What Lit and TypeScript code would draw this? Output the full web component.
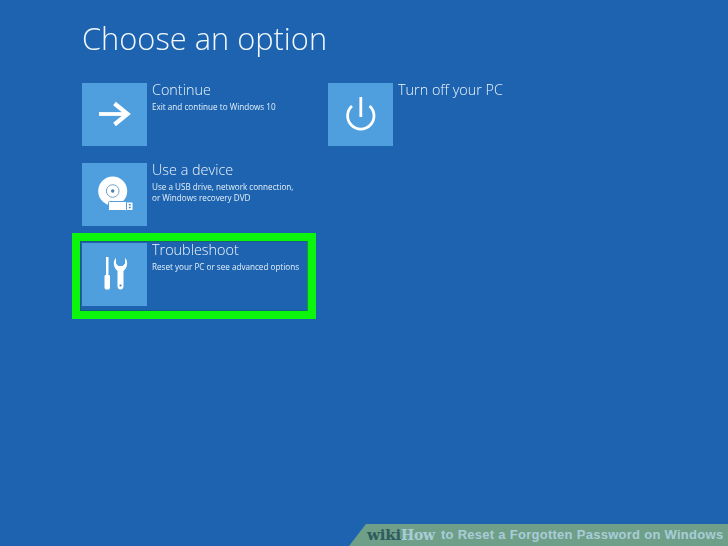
import { LitElement, html, css, svg } from "lit";
import { customElement } from "lit/decorators.js";

const arrow = svg`<svg class="ic" viewBox="0 0 65 63"><path d="M17 31H45" stroke="#fff" stroke-width="3.800" fill="none"/><path d="M32.500 20.500L45.500 31L32.500 41.500" stroke="#fff" stroke-width="4.200" fill="none"/></svg>`;
const power = svg`<svg class="ic" viewBox="0 0 65 63"><path d="M32.800 14V34" stroke="#fff" stroke-width="2.800" fill="none"/><path d="M24 23A13.200 13.200 0 1 0 41.600 23" stroke="#fff" stroke-width="2.800" fill="none"/></svg>`;
const disc = svg`<svg class="ic" viewBox="0 0 65 63"><circle cx="30.700" cy="28" r="14.500" fill="#fff"/><circle cx="30.700" cy="28" r="6.300" fill="none" stroke="#6fa5cc" stroke-width="1"/><circle cx="30.700" cy="28" r="1.700" fill="#4a7fa8"/><rect x="26.500" y="38.500" width="18" height="9" rx="1" fill="#fff" stroke="#4f9fde" stroke-width="1"/><rect x="45" y="39.500" width="5.500" height="7.500" fill="#fff"/><rect x="46.800" y="41" width="2" height="1.500" fill="#5a8fb8"/><rect x="46.800" y="43.800" width="2" height="1.500" fill="#5a8fb8"/></svg>`;
const tools = svg`<svg class="ic" viewBox="0 0 65 63"><path d="M24 14H26.500V32H24Z" fill="#fff"/><path d="M23 32H27.500L28 33.500V45L27 46.500H23.500L22.500 45V33.500Z" fill="#fff"/><path d="M34 15C31 17.500 31 24 34.800 27.200L35.500 27.800V43C35.500 45.500 37 46.500 38.500 46.500C40 46.500 41.500 45.500 41.500 43V27.800L42.200 27.200C46 24 46 17.500 43 15V20.500L40.700 23H36.300L34 20.500Z" fill="#fff"/><circle cx="38.500" cy="42.500" r="1.100" fill="#3f7fb0"/></svg>`;

@customElement("app-root")
export class AppRoot extends LitElement {
  static styles = css`
    :host {
      display: flex;
      flex-direction: column;
      width: 728px;
      height: 546px;
      overflow: hidden;
      position: relative;
      background: #1d63b0;
      color: #fff;
      font-family: "Open Sans", "Liberation Sans", sans-serif;
    }
    .main {
      flex: 1;
      padding: 18px 0 0 82px;
      box-sizing: border-box;
      filter: blur(0.3px);
    }
    h1 {
      margin: 0;
      font-size: 30.800px;
      line-height: 40px;
      font-weight: 300;
      color: #f2f8fc;
    }
    .cols {
      display: flex;
      margin-top: 25px;
    }
    .col {
      display: flex;
      flex-direction: column;
      gap: 17px;
      width: 246px;
    }
    .opt {
      display: flex;
      gap: 5px;
      height: 63px;
    }
    .tile {
      width: 65px;
      height: 63px;
      background: #4f9fdf;
      flex: none;
    }
    .ic {
      display: block;
      width: 65px;
      height: 63px;
    }
    .txt {
      margin-top: -3px;
    }
    .t {
      font-size: 14.400px;
      line-height: 19px;
      font-weight: 300;
      color: #eef6fb;
      margin-bottom: 1.500px;
    }
    .d {
      font-size: 8.150px;
      line-height: 11.700px;
      color: #e6f1f9;
    }
    .hl {
      position: absolute;
      left: 72px;
      top: 233px;
      width: 244px;
      height: 86px;
      box-sizing: border-box;
      border: solid #0cf50c;
      border-width: 8px 9px 8px 8px;
      outline: 1px solid rgba(20, 90, 90, 0.6);
      outline-offset: -9px;
    }
    .banner {
      height: 22px;
      margin-left: 349px;
      background: #6f9f88;
      clip-path: polygon(17px 0, 100% 0, 100% 100%, 0 100%);
      display: flex;
      align-items: center;
      padding-left: 18px;
      font: bold 13px/22px "Liberation Sans", sans-serif;
      color: #a9cdd8;
      white-space: nowrap;
      letter-spacing: 0.275px;
    }
    .wiki {
      font: bold 15px/22px "DejaVu Serif", serif;
      color: #2f5a5e;
      letter-spacing: -0.2px;
    }
    .how {
      font: bold 14px/22px "DejaVu Serif", serif;
      color: #a9cdd8;
      letter-spacing: -0.2px;
      margin-right: 6px;
    }
  `;

  private opt(icon: unknown, title: string, lines: string[] = []) {
    return html`<div class="opt">
      <div class="tile">${icon}</div>
      <div class="txt">
        <div class="t">${title}</div>
        ${lines.map((l) => html`<div class="d">${l}</div>`)}
      </div>
    </div>`;
  }

  render() {
    return html`
      <div class="main">
        <h1>Choose an option</h1>
        <div class="cols">
          <div class="col">
            ${this.opt(arrow, "Continue", ["Exit and continue to Windows 10"])}
            ${this.opt(disc, "Use a device", ["Use a USB drive, network connection,", "or Windows recovery DVD"])}
            ${this.opt(tools, "Troubleshoot", ["Reset your PC or see advanced options"])}
          </div>
          <div class="col">${this.opt(power, "Turn off your PC")}</div>
        </div>
      </div>
      <div class="hl"></div>
      <div class="banner"><span class="wiki">wiki</span><span class="how">How</span><span>to Reset a Forgotten Password on Windows</span></div>
    `;
  }
}
